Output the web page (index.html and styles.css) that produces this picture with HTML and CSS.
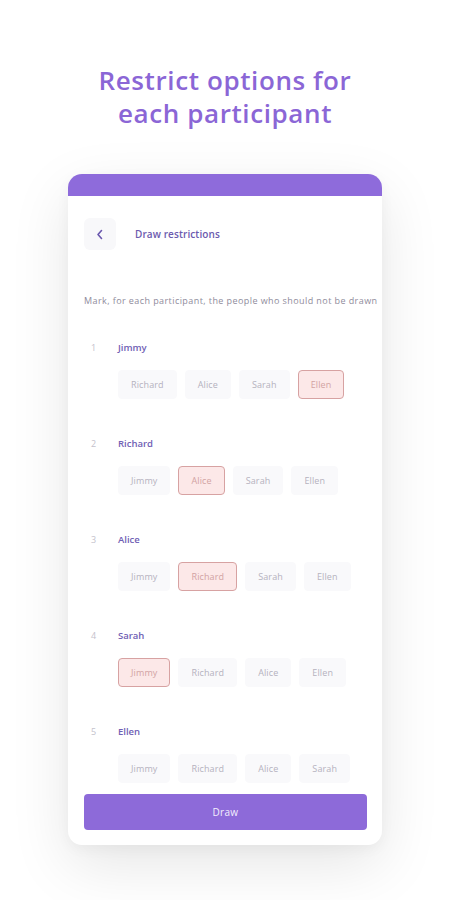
FILE: index.html
```html
<!DOCTYPE html>
<html>
<head>
<meta charset="utf-8">
<link rel="stylesheet" href="styles.css">
</head>
<body>
<h1 class="headline">Restrict options for<br>each participant</h1>
<div class="card">
  <div class="card-band"></div>
  <div class="card-body">
    <div class="topbar">
      <div class="back-btn">
        <svg width="8" height="11" viewBox="0 0 8 11"><path d="M5.5 1.5 L2 5.5 L5.5 9.5" fill="none" stroke="#6a58ae" stroke-width="1.6" stroke-linecap="round" stroke-linejoin="round"/></svg>
      </div>
      <div class="topbar-title">Draw restrictions</div>
    </div>
    <p class="hint">Mark, for each participant, the people who should not be drawn</p>

    <div class="person">
      <div class="num">1</div>
      <div class="name">Jimmy</div>
      <div class="chips">
        <span class="chip">Richard</span><span class="chip">Alice</span><span class="chip">Sarah</span><span class="chip chip-on">Ellen</span>
      </div>
    </div>
    <div class="person">
      <div class="num">2</div>
      <div class="name">Richard</div>
      <div class="chips">
        <span class="chip">Jimmy</span><span class="chip chip-on">Alice</span><span class="chip">Sarah</span><span class="chip">Ellen</span>
      </div>
    </div>
    <div class="person">
      <div class="num">3</div>
      <div class="name">Alice</div>
      <div class="chips">
        <span class="chip">Jimmy</span><span class="chip chip-on">Richard</span><span class="chip">Sarah</span><span class="chip">Ellen</span>
      </div>
    </div>
    <div class="person">
      <div class="num">4</div>
      <div class="name">Sarah</div>
      <div class="chips">
        <span class="chip chip-on">Jimmy</span><span class="chip">Richard</span><span class="chip">Alice</span><span class="chip">Ellen</span>
      </div>
    </div>
    <div class="person person-last">
      <div class="num">5</div>
      <div class="name">Ellen</div>
      <div class="chips">
        <span class="chip">Jimmy</span><span class="chip">Richard</span><span class="chip">Alice</span><span class="chip">Sarah</span>
      </div>
    </div>

    <button class="draw-btn">Draw</button>
  </div>
</div>
</body>
</html>
```

FILE: styles.css
```css
* { box-sizing: border-box; }
html, body {
  margin: 0;
  padding: 0;
  background: #ffffff;
  font-family: "Open Sans", Lato, "Liberation Sans", sans-serif;
}
body {
  width: 450px;
  height: 900px;
  overflow: hidden;
}
.headline {
  margin: 64px 0 0 0;
  text-align: center;
  font-size: 26px;
  line-height: 33px;
  font-weight: 600;
  color: #8b66d6;
  letter-spacing: 0.6px;
}
.card {
  width: 314px;
  margin: 44px auto 0 auto;
  background: #ffffff;
  border-radius: 14px;
  overflow: hidden;
  box-shadow: 0 20px 60px rgba(0, 0, 0, 0.10), 0 4px 14px rgba(0, 0, 0, 0.04);
}
.card-band {
  height: 22px;
  background: #8e6bdb;
}
.card-body {
  padding: 22px 15px 15px 16px;
}
.topbar {
  display: flex;
  align-items: center;
  gap: 19px;
}
.back-btn {
  width: 32px;
  height: 32px;
  border-radius: 6px;
  background: #f8f8fa;
  display: flex;
  align-items: center;
  justify-content: center;
}
.topbar-title {
  font-size: 10px;
  font-weight: 600;
  color: #6c5aae;
  letter-spacing: 0.1px;
}
.hint {
  margin: 45px 0 0 0;
  font-size: 9px;
  line-height: 12px;
  color: #8f8c9c;
  white-space: nowrap;
  letter-spacing: 0.42px;
}
.person {
  display: grid;
  grid-template-columns: 34px 1fr;
  row-gap: 16px;
  margin-top: 35px;
}
.num {
  padding-left: 7px;
  font-size: 9px;
  line-height: 12px;
  color: #c4c2cc;
}
.name {
  font-size: 9.5px;
  line-height: 12px;
  font-weight: 600;
  color: #7060b4;
}
.chips {
  grid-column: 2;
  display: flex;
  gap: 8px;
}
.chip {
  height: 29px;
  padding: 0 12px;
  display: flex;
  align-items: center;
  border-radius: 4px;
  background: #f9f9fb;
  border: 1px solid #f9f9fb;
  font-size: 9px;
  letter-spacing: 0.12px;
  color: #b5b2be;
}
.chip-on {
  background: #fce8e8;
  border-color: #d7a2a2;
  color: #d2a3a3;
}
.person + .person { margin-top: 39px; }
.draw-btn {
  display: block;
  width: 100%;
  height: 36px;
  margin-top: 11px;
  border: none;
  border-radius: 4px;
  background: #8d6ad9;
  color: #f3eefd;
  font-family: "Open Sans", Lato, "Liberation Sans", sans-serif;
  font-size: 10px;
  letter-spacing: 0.3px;
}
```
